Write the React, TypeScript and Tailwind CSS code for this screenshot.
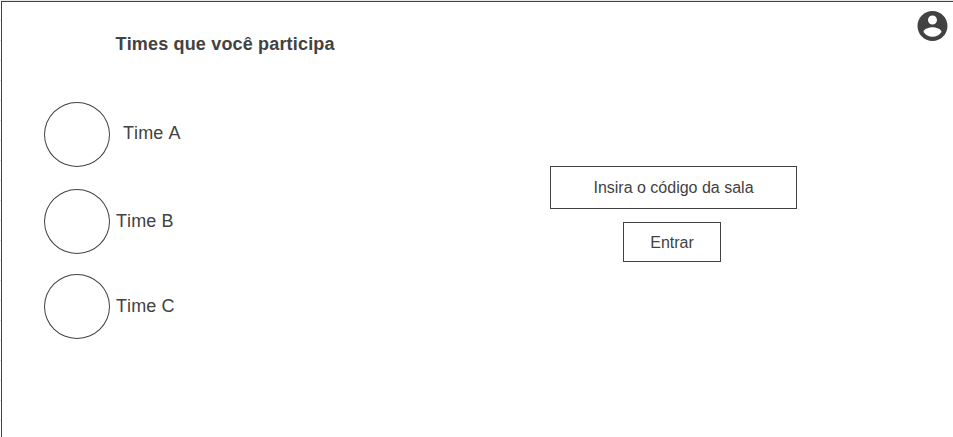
import React from "react";

const teams = [
  { name: "Time A", row: "mt-[42px] gap-[13px]", label: "pb-1" },
  { name: "Time B", row: "mt-[22px] gap-[6px]", label: "pb-0.5" },
  { name: "Time C", row: "mt-5 gap-[6px]", label: "pb-0.5" },
];

function AccountIcon() {
  return (
    <svg viewBox="1.6667 2 20.6667 20" className="h-[30px] w-[31px]" fill="#424242" aria-hidden="true">
      <path d="M12 2C6.48 2 2 6.48 2 12s4.48 10 10 10 10-4.48 10-10S17.52 2 12 2zm0 3c1.66 0 3 1.34 3 3s-1.34 3-3 3-3-1.34-3-3 1.34-3 3-3zm0 14.2c-2.5 0-4.71-1.28-6-3.22.03-1.99 4-3.08 6-3.08 1.99 0 5.97 1.09 6 3.08-1.29 1.94-3.5 3.22-6 3.22z" />
    </svg>
  );
}

export default function App() {
  return (
    <div className="flex h-[437px] w-[953px] flex-col overflow-hidden bg-white bg-[repeating-linear-gradient(to_bottom,#e5e5e5_0px,#e5e5e5_1px,#ffffff_1px,#ffffff_20px)] font-['Liberation_Sans',Arial,sans-serif] text-[#424242]">
      <div className="h-px shrink-0 bg-[#e8e8e8]" />
      <main className="ml-px flex grow border-l border-t border-[#424242] bg-white">
        <section className="flex w-[548px] flex-col pl-[42px] pt-[31px] [font-kerning:none]">
          <h1 className="ml-[71.5px] h-[27px] text-[18px] leading-[22px] font-bold tracking-[0.17px] whitespace-nowrap">
            Times que você participa
          </h1>
          {teams.map((team) => (
            <div key={team.name} className={`flex items-center ${team.row}`}>
              <span className="h-[65px] w-[66px] rounded-[50%] border border-[#424242]" />
              <span className={`text-[18px] leading-[22px] tracking-[0.08px] ${team.label}`}>{team.name}</span>
            </div>
          ))}
        </section>
        <section className="flex w-[247px] flex-col gap-[13px] pt-[164px] text-[16px]">
          <div className="flex h-[43px] w-full items-center justify-center border border-[#424242]">
            Insira o código da sala
          </div>
          <button className="ml-[73px] h-10 w-[98px] border border-[#424242] pt-0.5">Entrar</button>
        </section>
        <div className="ml-auto mr-[5px] mt-[9px]">
          <AccountIcon />
        </div>
      </main>
    </div>
  );
}
